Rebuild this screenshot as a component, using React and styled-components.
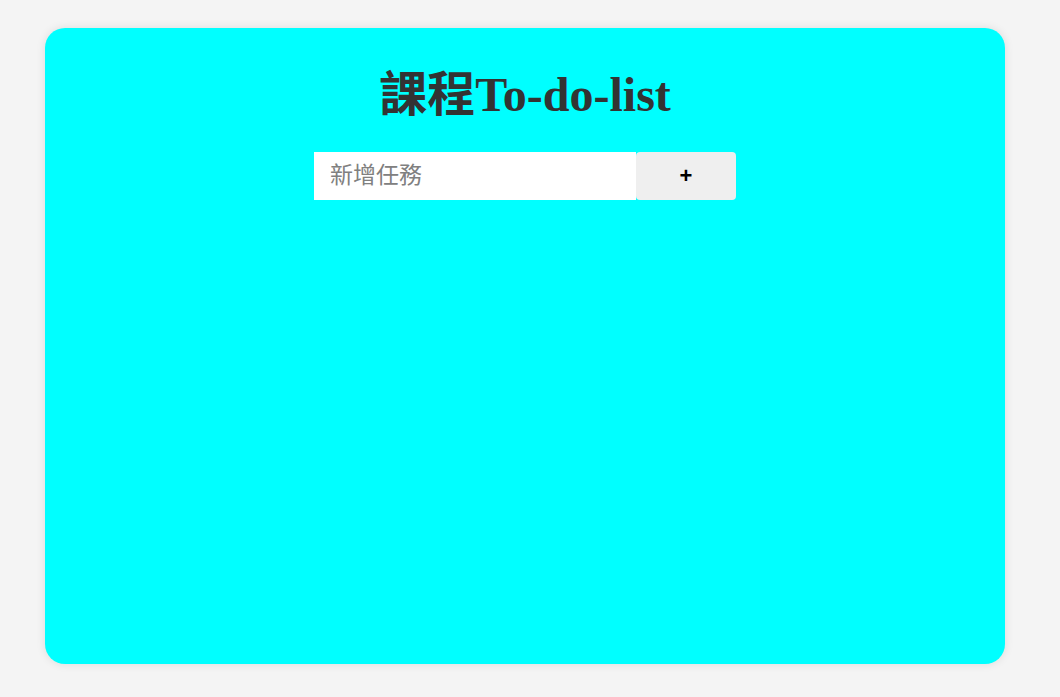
import styled, { createGlobalStyle } from "styled-components";

const GlobalStyle = createGlobalStyle`
  html, body {
    margin: 0;
    padding: 0;
    background: #f4f4f4;
  }
`;

const App = () => {
  return (
    <>
      <GlobalStyle />
      <Page>
        <Card>
          <Title>課程To-do-list</Title>
          <Form onSubmit={(e) => e.preventDefault()}>
            <TaskInput type="text" placeholder="新增任務" />
            <AddButton type="submit">+</AddButton>
          </Form>
        </Card>
      </Page>
    </>
  );
};

export default App;

const Page = styled.div`
  width: 1060px;
  height: 697px;
  padding: 28px 55px 33px 45px;
  box-sizing: border-box;
`;

const Card = styled.div`
  width: 960px;
  height: 636px;
  background: #00ffff;
  border-radius: 20px;
  box-shadow: 0 0 10px rgba(0, 0, 0, 0.1);
  display: flex;
  flex-direction: column;
  align-items: center;
  padding-top: 39px;
  box-sizing: border-box;
`;

const Title = styled.h1`
  margin: 0;
  height: 56px;
  line-height: 56px;
  font-size: 48px;
  font-weight: bold;
  color: #333333;
  font-family: "Liberation Serif", "Noto Sans CJK TC", serif;
`;

const Form = styled.form`
  display: flex;
  margin-top: 29px;
`;

const TaskInput = styled.input`
  width: 322px;
  height: 48px;
  box-sizing: border-box;
  border: none;
  outline: none;
  padding: 0 16px 7px;
  font-size: 23px;
  font-family: "Noto Sans CJK TC", sans-serif;
  background: #ffffff;

  &::placeholder {
    color: #808080;
  }
`;

const AddButton = styled.button`
  width: 100px;
  height: 48px;
  border: none;
  border-radius: 4px;
  background: #efefef;
  font-size: 22px;
  font-weight: bold;
  font-family: "Liberation Sans", Arial, sans-serif;
  color: #000000;
  cursor: pointer;
`;
